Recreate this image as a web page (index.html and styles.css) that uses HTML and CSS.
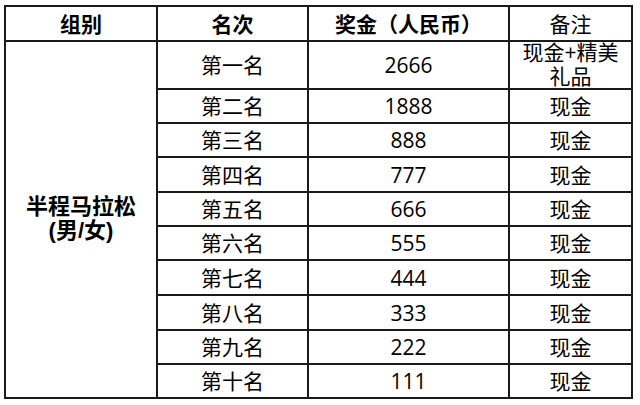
FILE: index.html
```html
<!DOCTYPE html>
<html lang="zh-CN">
<head>
<meta charset="utf-8">
<title>半程马拉松奖金</title>
<link rel="stylesheet" href="styles.css">
</head>
<body>
<div class="prize-table">
  <div class="cell head bold">组别</div>
  <div class="cell head bold">名次</div>
  <div class="cell head bold">奖金（人民币）</div>
  <div class="cell head">备注</div>

  <div class="cell group">半程马拉松<br>(男/女)</div>

  <div class="cell">第一名</div><div class="cell">2666</div><div class="cell note">现金+精美礼品</div>
  <div class="cell">第二名</div><div class="cell">1888</div><div class="cell">现金</div>
  <div class="cell">第三名</div><div class="cell">888</div><div class="cell">现金</div>
  <div class="cell">第四名</div><div class="cell">777</div><div class="cell">现金</div>
  <div class="cell">第五名</div><div class="cell">666</div><div class="cell">现金</div>
  <div class="cell">第六名</div><div class="cell">555</div><div class="cell">现金</div>
  <div class="cell">第七名</div><div class="cell">444</div><div class="cell">现金</div>
  <div class="cell">第八名</div><div class="cell">333</div><div class="cell">现金</div>
  <div class="cell">第九名</div><div class="cell">222</div><div class="cell">现金</div>
  <div class="cell">第十名</div><div class="cell">111</div><div class="cell">现金</div>
</div>
</body>
</html>
```

FILE: styles.css
```css
html, body {
  margin: 0;
  padding: 0;
  background: #ffffff;
}

body {
  padding: 5px 0 0 4px;
  font-family: "Open Sans", "Noto Sans CJK SC", sans-serif;
  color: #000;
}

.prize-table {
  display: grid;
  grid-template-columns: 152px 151px 201px 123px;
  grid-template-rows: 35px 48px 34px 34px 35px 34px 34px 35px 35px 34px 34px;
  width: max-content;
  border-left: 2px solid #1a1a1a;
  border-top: 2px solid #1a1a1a;
}

.cell {
  box-sizing: border-box;
  border-right: 2px solid #1a1a1a;
  border-bottom: 2px solid #1a1a1a;
  display: flex;
  align-items: center;
  justify-content: center;
  text-align: center;
  font-size: 21px;
  line-height: 24px;
  padding: 0 4px;
}

.bold {
  font-weight: 700;
}

.group {
  grid-column: 1;
  grid-row: 2 / span 10;
  font-family: "Liberation Sans", "Noto Sans CJK SC", sans-serif;
  font-size: 22px;
  font-weight: 700;
  line-height: 24px;
  padding-bottom: 2px;
}

.note {
  line-height: 24px;
  padding-bottom: 3px;
}
```
